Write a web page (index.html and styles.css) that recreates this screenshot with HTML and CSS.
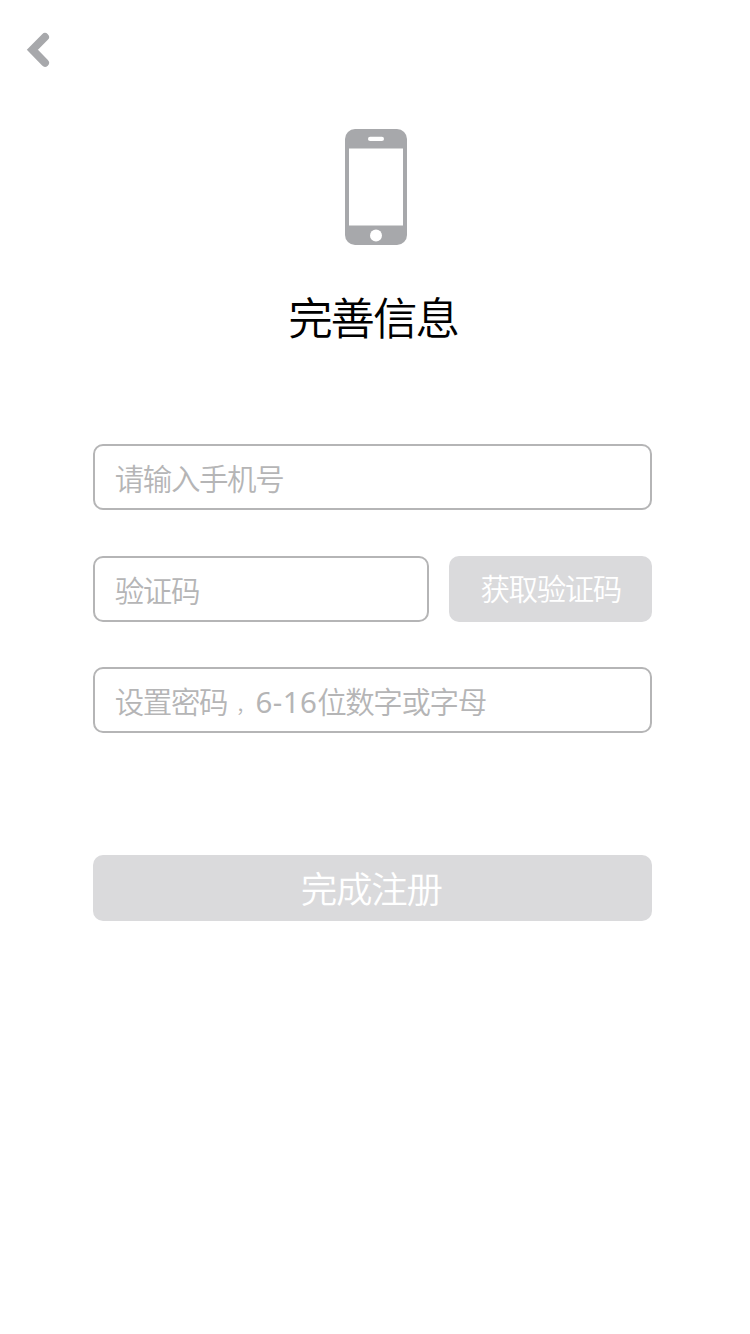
FILE: index.html
```html
<!DOCTYPE html>
<html lang="zh-CN">
<head>
<meta charset="utf-8">
<title>完善信息</title>
<link rel="stylesheet" href="styles.css">
</head>
<body>
<main class="page">
  <header class="topbar">
    <svg class="back" viewBox="0 0 24 36" width="24" height="36"><path d="M19 5 6.4 17.8 19 30.8" fill="none" stroke="#a7a8ab" stroke-width="8" stroke-linecap="round" stroke-linejoin="miter"/></svg>
  </header>
  <svg class="phone" viewBox="0 0 62 116" width="62" height="116">
    <rect width="62" height="116" rx="10" fill="#a7a8ab"/>
    <rect x="4" y="19.5" width="54" height="77" fill="#fff"/>
    <rect x="23" y="7.8" width="16" height="4.2" rx="2.1" fill="#fff"/>
    <circle cx="31" cy="106.4" r="6" fill="#fff"/>
  </svg>
  <h1 class="title">完善信息</h1>
  <form class="form">
    <div class="field">请输入手机号</div>
    <div class="row">
      <div class="field code">验证码</div>
      <div class="button send"><span>获取验证码</span></div>
    </div>
    <div class="field">设置密码<span class="comma">，</span><span class="latin">6-16</span>位数字或字母</div>
    <div class="button submit"><span>完成注册</span></div>
  </form>
</main>
</body>
</html>
```
FILE: styles.css
```css
* { box-sizing: border-box; }
body {
  margin: 0;
  background: #fff;
  font-family: "Noto Sans CJK SC", sans-serif;
  font-weight: 350;
}
.page {
  display: flex;
  flex-direction: column;
  align-items: center;
  width: 750px;
  height: 1334px;
}
.topbar {
  width: 100%;
  height: 129px;
  padding: 32px 0 0 26px;
}
.back, .phone { display: block; }
.phone { margin-left: 2px; }
.title {
  margin: 41px 0 0;
  height: 62px;
  padding-right: 4px;
  font-size: 44.5px;
  font-weight: 350;
  line-height: 60px;
  letter-spacing: -2.1px;
  color: #000;
}
.form {
  display: flex;
  flex-direction: column;
  gap: 45.6px;
  width: 559px;
  margin: 96px 5.6px 0 0;
}
.field {
  height: 66px;
  padding-left: 20px;
  border: 2px solid #b5b5b6;
  border-radius: 10px;
  font-size: 29.5px;
  line-height: 62px;
  letter-spacing: -1.4px;
  white-space: nowrap;
  color: #b5b5b6;
}
.row {
  display: flex;
  gap: 20px;
}
.code { width: 336px; }
.button {
  display: flex;
  align-items: center;
  justify-content: center;
  height: 66px;
  padding-bottom: 3px;
  border-radius: 10px;
  background: #dadadc;
  color: #fff;
}
.send {
  width: 203px;
  padding-left: 1px;
  font-size: 29.5px;
  letter-spacing: -1.4px;
}
.submit {
  margin-top: 76px;
  padding: 0 2px 1px 0;
  font-size: 36.5px;
  letter-spacing: -1.3px;
}
.comma {
  display: inline-block;
  width: 28.5px;
  padding-left: 9px;
  font-size: 19px;
  line-height: 1;
  letter-spacing: 0;
}
.latin {
  font-family: "Noto Sans", "Open Sans", sans-serif;
  font-weight: 400;
  letter-spacing: 0.35px;
}
```
